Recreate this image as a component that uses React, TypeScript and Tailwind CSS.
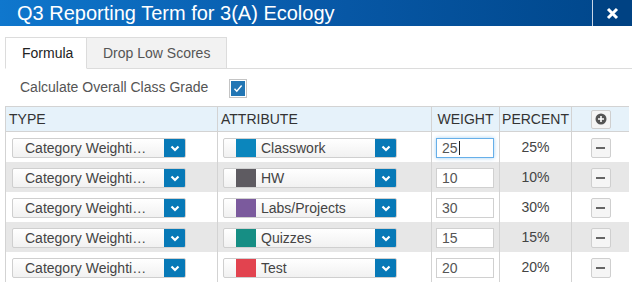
import React from "react";

const rows = [
  { name: "Classwork", color: "#0b86bd", weight: "25", pct: "25%", focus: true },
  { name: "HW", color: "#5e5b61", weight: "10", pct: "10%" },
  { name: "Labs/Projects", color: "#7b5a9d", weight: "30", pct: "30%" },
  { name: "Quizzes", color: "#168e84", weight: "15", pct: "15%" },
  { name: "Test", color: "#e2434f", weight: "20", pct: "20%" },
];

function Chevron() {
  return (
    <svg width="10" height="7" viewBox="0 0 10 7">
      <path d="M1.5 1.5 L5 5 L8.5 1.5" fill="none" stroke="white" strokeWidth="2.2" />
    </svg>
  );
}

function SelectBox({ children }: { children: React.ReactNode }) {
  return (
    <div className="flex h-[20px] w-[174px] rounded-[2px] border border-[#cfcfcf] bg-gradient-to-b from-white to-[#f1f1f1] overflow-hidden">
      <div className="flex flex-1 items-center min-w-0">{children}</div>
      <div className="flex w-[21px] items-center justify-center bg-[#0779b7]">
        <Chevron />
      </div>
    </div>
  );
}

export default function App() {
  return (
    <div
      className="w-[632px] h-[284px] overflow-hidden bg-white text-[#333]"
      style={{ fontFamily: '"Liberation Sans", Arial, sans-serif' }}
    >
      {/* Title bar */}
      <div className="flex h-[26px] bg-gradient-to-r from-[#0f77cd] via-[#0859a8] to-[#00468a]">
        <div className="pl-[17px] text-[20px] leading-[26px] text-white">
          Q3 Reporting Term for 3(A) Ecology
        </div>
        <div className="ml-auto flex w-[40px] items-center justify-center border-l border-[#c9d6e6] bg-[#004283]">
          <svg width="13" height="13" viewBox="0 0 13 13">
            <path d="M2 2 L11 11 M11 2 L2 11" stroke="white" strokeWidth="3" />
          </svg>
        </div>
      </div>

      {/* Tabs */}
      <div className="mt-[11px] ml-[5px] flex border-b border-[#dcdcdc]">
        <div className="-mb-px flex h-[32px] w-[82px] items-center border border-b-white border-[#dcdcdc] bg-white pl-[16px] text-[14px] text-[#222]">
          Formula
        </div>
        <div className="flex h-[31px] w-[140px] items-center border-t border-r border-[#dcdcdc] bg-[#f2f2f2] pl-[16px] text-[14px] text-[#555]">
          Drop Low Scores
        </div>
      </div>

      {/* Checkbox row */}
      <div className="flex h-[37px] items-center pl-[20px]">
        <div className="w-[209px] text-[14px] text-[#555]">Calculate Overall Class Grade</div>
        <div className="mt-[2px] flex h-[19px] w-[18px] items-center justify-center border border-[#c4c4c4] bg-white p-px">
          <div className="flex h-full w-full items-center justify-center bg-[#2276b4]">
            <svg width="10" height="9" viewBox="0 0 10 9">
              <path d="M1.5 4.8 L3.8 7.2 L8.6 1.5" fill="none" stroke="white" strokeWidth="1.4" />
            </svg>
          </div>
        </div>
      </div>

      {/* Table */}
      <div className="ml-[5px] w-[624px] border-t border-[#d3d3d3]">
        <div className="grid h-[25px] grid-cols-[212px_214px_68px_72px_58px] border-b border-[#d3d3d3] bg-[#e6f2fa] text-[14px] text-[#333]">
          <div className="flex items-center border-l border-[#d3d3d3] pl-[3px]">TYPE</div>
          <div className="flex items-center border-l border-[#d3d3d3] pl-[3px]">ATTRIBUTE</div>
          <div className="flex items-center justify-center border-l border-[#d3d3d3]">WEIGHT</div>
          <div className="flex items-center justify-center border-l border-[#d3d3d3]">PERCENT</div>
          <div className="flex items-center justify-center border-l border-[#d3d3d3]">
            <div className="flex h-[19px] w-[20px] items-center justify-center rounded-[2px] border border-[#cfcfcf] bg-[#f5f5f5]">
              <svg width="12" height="12" viewBox="0 0 12 12">
                <circle cx="6" cy="6" r="5.5" fill="#555" />
                <path d="M3 6 H9 M6 3 V9" stroke="white" strokeWidth="1.6" />
              </svg>
            </div>
          </div>
        </div>

        {rows.map((r, i) => (
          <div
            key={r.name}
            className={`grid h-[30px] grid-cols-[212px_214px_68px_72px_58px] text-[14px] ${
              i % 2 === 1 ? "bg-[#e7e7e7]" : "bg-white"
            }`}
          >
            <div className="border-l border-[#d3d3d3] pl-[6px] pt-[6px]">
              <SelectBox>
                <span className="pl-[12px] whitespace-nowrap text-[#444]">Category Weighti…</span>
              </SelectBox>
            </div>
            <div className="border-l border-[#d3d3d3] pl-[5px] pt-[6px]">
              <SelectBox>
                <div className="ml-[12px] h-full w-[20px] shrink-0" style={{ backgroundColor: r.color }} />
                <span className="pl-[5px] whitespace-nowrap text-[#444]">{r.name}</span>
              </SelectBox>
            </div>
            <div className="border-l border-[#d3d3d3] pl-[4px] pt-[6px]">
              <div
                className={`flex h-[20px] w-[58px] items-center border bg-white pl-[5px] text-[#555] ${
                  r.focus
                    ? "border-[#66afe9] shadow-[0_0_4px_rgba(102,175,233,0.6)]"
                    : "border-[#d0d0d0]"
                }`}
              >
                {r.weight}
                {r.focus && <span className="ml-px inline-block h-[14px] w-px bg-[#222]" />}
              </div>
            </div>
            <div className="flex items-start justify-center border-l border-[#d3d3d3] pt-[6px] leading-[18px] text-[#444]">
              {r.pct}
            </div>
            <div className="flex justify-center border-l border-[#d3d3d3] pt-[6px]">
              <div className="flex h-[20px] w-[20px] items-center justify-center rounded-[2px] border border-[#cfcfcf] bg-[#f5f5f5]">
                <div className="h-[2px] w-[9px] bg-[#666]" />
              </div>
            </div>
          </div>
        ))}
      </div>
    </div>
  );
}
